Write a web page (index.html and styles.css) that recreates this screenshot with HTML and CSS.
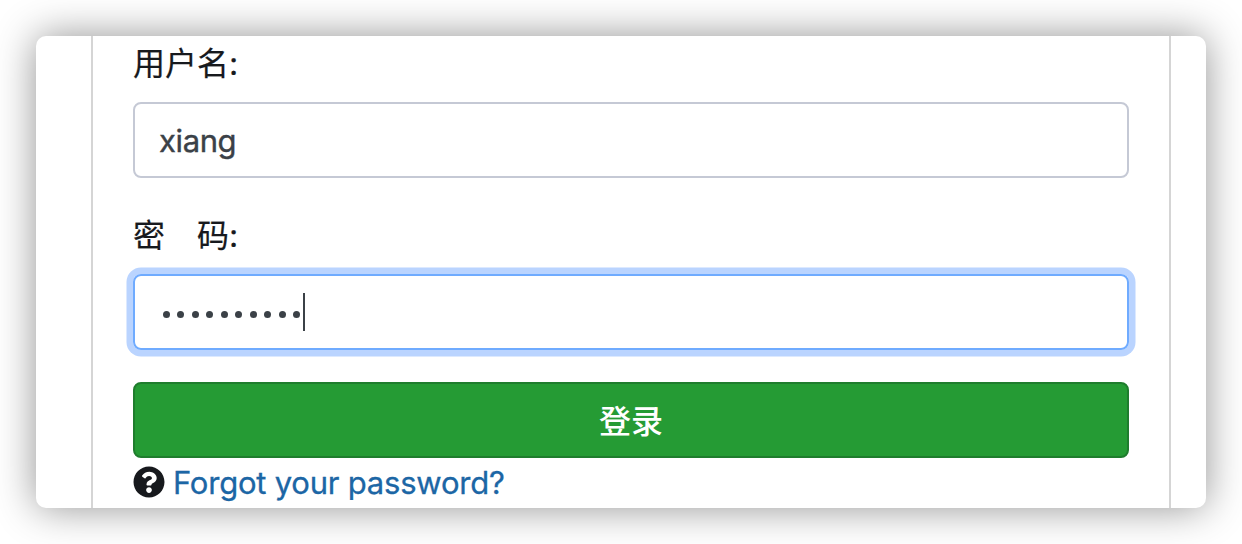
FILE: index.html
```html
<!DOCTYPE html>
<html lang="zh-CN">
<head>
<meta charset="utf-8">
<title>登录</title>
<link rel="stylesheet" href="styles.css">
</head>
<body>
<main class="window">
  <form class="login">
    <label class="label">用户名:</label>
    <div class="field">xiang</div>
    <label class="label">密　码:</label>
    <div class="field field-focus"><span class="dots"><i></i><i></i><i></i><i></i><i></i><i></i><i></i><i></i><i></i><i></i></span><span class="caret"></span></div>
    <button class="submit" type="button">登录</button>
    <div class="forgot">
      <svg class="help" viewBox="0 0 512 512"><path fill="#17191d" d="M504 256c0 137-111 248-248 248S8 393 8 256C8 119 119 8 256 8s248 111 248 248zM262.700 90c-54.500 0-89.300 23-116.500 63.800-3.500 5.300-2.400 12.400 2.700 16.300l34.700 26.300c5.200 3.900 12.600 3 16.700-2.100 17.900-22.700 30.100-35.800 57.300-35.800 20.400 0 45.700 13.100 45.700 33 0 15-12.400 22.700-32.500 34C247.100 238.500 216 255 216 296v4c0 6.600 5.400 12 12 12h56c6.600 0 12-5.400 12-12v-1.300c0-28.500 83.200-29.600 83.200-106.700 0-58-60.200-102-116.500-102zM256 338c-25.400 0-46 20.600-46 46s20.600 46 46 46 46-20.600 46-46-20.600-46-46-46z"/></svg>
      <a class="link">Forgot your password?</a>
    </div>
  </form>
</main>
</body>
</html>
```
FILE: styles.css
```css
* { box-sizing: border-box; }
body {
  margin: 0;
  width: 1242px;
  height: 544px;
  padding: 36px;
  overflow: hidden;
  background: #fff;
  font-family: Inter, "Noto Sans CJK SC", sans-serif;
  font-size: 32px;
  color: #212529;
}
.window {
  height: 472px;
  padding: 0 35px 0 55px;
  border-radius: 10px;
  background: #fff;
  box-shadow: 0 0 40px rgba(0, 0, 0, .43);
}
.login {
  display: flex;
  flex-direction: column;
  height: 472px;
  padding: 0 40px;
  border: solid #d5d5d5;
  border-width: 0 2px;
}
.label {
  height: 48px;
  margin: 4px 0 14px;
  line-height: 48px;
  color: #17191d;
  -webkit-text-stroke: .2px #17191d;
}
.field {
  display: flex;
  align-items: center;
  flex: none;
  height: 76px;
  padding: 1px 24px 0;
  border: 2px solid #c5c9d5;
  border-radius: 8px;
  color: #3b4147;
  font-size: 31px;
  letter-spacing: -.4px;
  -webkit-text-stroke: .4px #3b4147;
}
.field + .label { margin: 34px 0 14px; }
.field-focus {
  padding-top: 0;
  border-color: #6fabff;
  box-shadow: 0 0 0 6.500px #bad4ff;
}
.dots { display: flex; gap: 7.500px; padding: 5px 0 0 3.500px; }
.dots i { width: 7px; height: 7px; border-radius: 50%; background: #3b4147; }
.caret { width: 2px; height: 38px; margin: 0 0 0 2.500px; background: #3b4147; }
.submit {
  flex: none;
  height: 76px;
  margin-top: 32px;
  padding: 3px 0 0;
  border: 2px solid #1f7d2d;
  border-radius: 8px;
  background: #259b34;
  color: #fff;
  font: 500 32px/69px Inter, "Noto Sans CJK SC", sans-serif;
}
.forgot { display: flex; align-items: center; gap: 8px; height: 48px; }
.help { width: 32px; height: 32px; }
.link { color: #1c66a5; font-size: 31px; letter-spacing: -.22px; -webkit-text-stroke: .3px #1c66a5; }
```
